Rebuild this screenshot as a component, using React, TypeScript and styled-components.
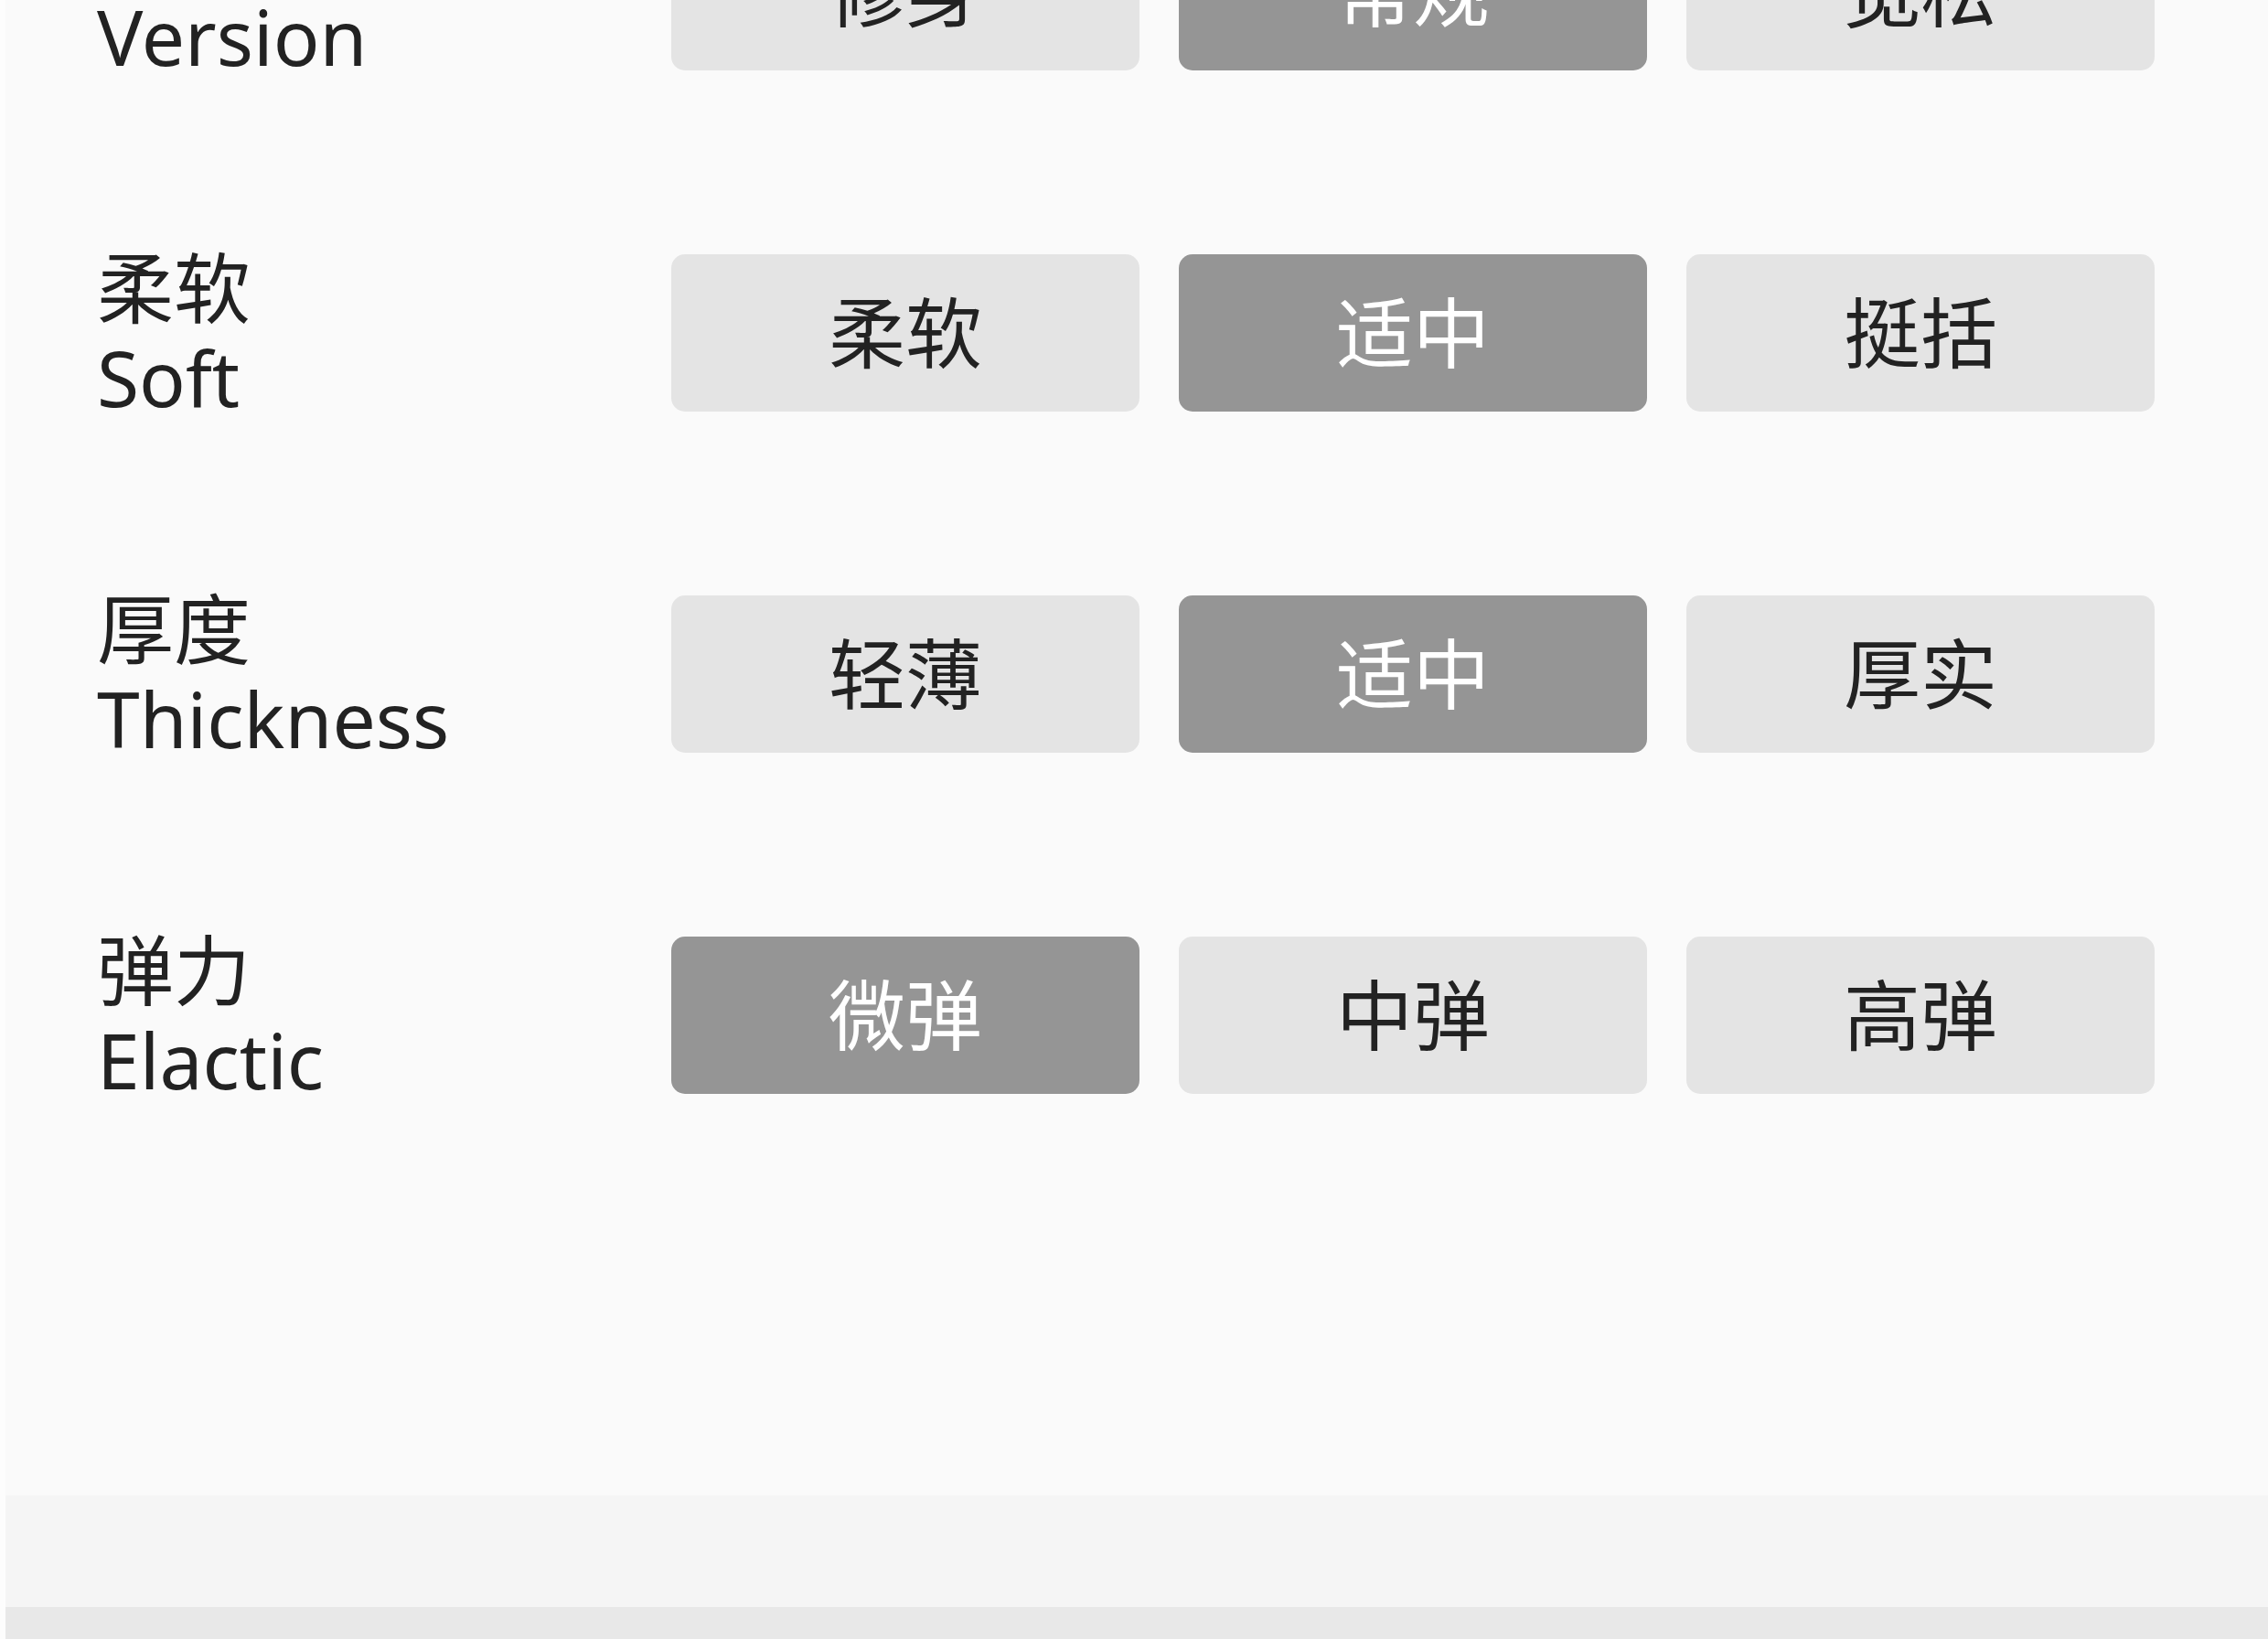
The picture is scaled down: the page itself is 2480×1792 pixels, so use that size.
import styled, { createGlobalStyle } from "styled-components";

type Option = {
  zh: string;
  en: string;
  values: string[];
  active: number;
};

const options: Option[] = [
  { zh: "版型", en: "Version", values: ["修身", "常规", "宽松"], active: 1 },
  { zh: "柔软", en: "Soft", values: ["柔软", "适中", "挺括"], active: 1 },
  { zh: "厚度", en: "Thickness", values: ["轻薄", "适中", "厚实"], active: 1 },
  { zh: "弹力", en: "Elactic", values: ["微弹", "中弹", "高弹"], active: 0 },
];

const App = () => {
  return (
    <>
      <GlobalStyle />
      <Page>
        <Sheet>
          <OptionList>
            {options.map((opt) => (
              <OptionRow key={opt.en}>
                <Label>
                  <span>{opt.zh}</span>
                  <span>{opt.en}</span>
                </Label>
                <Choices>
                  {opt.values.map((v, idx) => (
                    <Chip key={idx} $active={idx === opt.active}>
                      {v}
                    </Chip>
                  ))}
                </Choices>
              </OptionRow>
            ))}
          </OptionList>
          <FooterBand />
          <BottomBar />
        </Sheet>
      </Page>
    </>
  );
};

export default App;

const GlobalStyle = createGlobalStyle`
  html, body {
    margin: 0;
    padding: 0;
    background: #fdfdfd;
    overflow: hidden;
  }
`;

const Page = styled.div`
  min-height: 100vh;
  padding-left: 6px;
  background: #fdfdfd;
  font-family: "Noto Sans", "Noto Sans CJK SC", sans-serif;
  color: #222222;
`;

const Sheet = styled.main`
  display: flex;
  flex-direction: column;
  min-height: 100vh;
  background: #fafafa;
`;

const OptionList = styled.section`
  display: flex;
  flex-direction: column;
  gap: 177px;
  margin-top: -107px;
  padding: 0 0 427px 100px;
`;

const OptionRow = styled.div`
  display: grid;
  grid-template-columns: 628px auto;
  align-items: center;
`;

const Label = styled.div`
  display: flex;
  flex-direction: column;
  font-size: 84px;
  line-height: 98px;
  white-space: nowrap;
`;

const Choices = styled.div`
  display: grid;
  grid-template-columns: repeat(3, 512px);
  column-gap: 43px;
`;

const Chip = styled.button<{ $active: boolean }>`
  height: 172px;
  border: none;
  border-radius: 15px;
  padding: 0;
  display: flex;
  align-items: center;
  justify-content: center;
  font-family: inherit;
  font-size: 84px;
  line-height: 100px;
  background: ${({ $active }) => ($active ? "#959595" : "#e4e4e4")};
  color: ${({ $active }) => ($active ? "#ffffff" : "#222222")};
  cursor: pointer;
`;

const FooterBand = styled.div`
  height: 122px;
  background: #f5f5f5;
`;

const BottomBar = styled.div`
  flex: 1;
  min-height: 60px;
  background: #e8e8e8;
`;
